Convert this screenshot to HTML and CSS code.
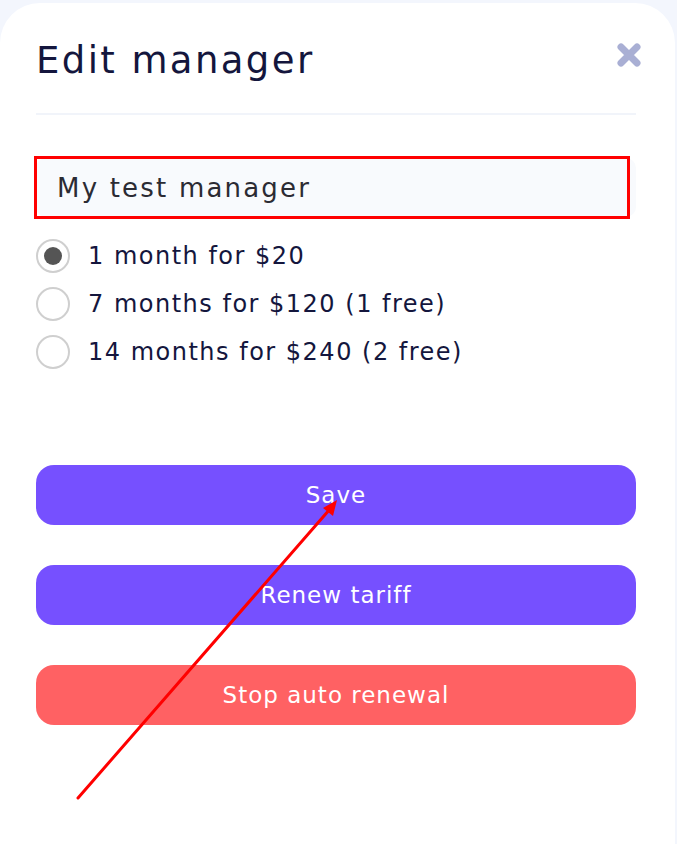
FILE: index.html
```html
<!DOCTYPE html>
<html lang="en">
<head>
    <meta charset="UTF-8">
    <meta name="viewport" content="width=device-width, initial-scale=1.0">
    <title>Edit manager</title>
    <link rel="stylesheet" href="styles.css">
</head>
<body>

    <div class="modal">
        <div class="modal-header">
            <h1>Edit manager</h1>
            <button class="close" aria-label="Close">
                <svg width="26" height="26" viewBox="0 0 26 26">
                    <path d="M5 5 L21 21 M21 5 L5 21" stroke="#a9afd4" stroke-width="7" stroke-linecap="round"/>
                </svg>
            </button>
        </div>

        <div class="field">
            <input type="text" id="manager-name" value="My test manager">
            <div class="mark"></div>
        </div>

        <ul class="tariffs">
            <li><label><input type="radio" name="tariff" checked><span class="dot"></span>1 month for $20</label></li>
            <li><label><input type="radio" name="tariff"><span class="dot"></span>7 months for $120 (1 free)</label></li>
            <li><label><input type="radio" name="tariff"><span class="dot"></span>14 months for $240 (2 free)</label></li>
        </ul>

        <div class="actions">
            <button class="btn">Save</button>
            <button class="btn">Renew tariff</button>
            <button class="btn btn-danger">Stop auto renewal</button>
        </div>
    </div>

    <!-- стрелка-пометка поверх скриншота -->
    <svg class="arrow" width="677" height="844" viewBox="0 0 677 844">
        <line x1="78" y1="798" x2="330" y2="509" stroke="#ff0000" stroke-width="3" stroke-linecap="round"/>
        <polygon points="337,500 323,508 333,516" fill="#ff0000"/>
    </svg>

</body>
</html>
```

FILE: styles.css
```css
* {
    box-sizing: border-box;
}
body {
    margin: 0;
    padding-top: 3px;
    background-color: #f3f6fd;
    font-family: "DejaVu Sans", sans-serif;
    color: #14163d;
    overflow: hidden;
}
.modal {
    width: 675px;
    min-height: 841px;
    padding: 0 39px 0 36px;
    background-color: #fff;
    border-radius: 40px 40px 0 0;
}
.modal-header {
    display: flex;
    justify-content: space-between;
    align-items: flex-start;
    padding-top: 33px;
    padding-bottom: 27px;
    border-bottom: 2px solid #f1f4fa;
}
.modal-header h1 {
    margin: 0;
    font-size: 37px;
    font-weight: 400;
    line-height: 50px;
    letter-spacing: 2.4px;
}
.close {
    border: 0;
    background: none;
    padding: 0;
    margin: 6px -6px 0 0;
    cursor: pointer;
}
.field {
    position: relative;
    margin-top: 43px;
}
.field input {
    display: block;
    width: 100%;
    height: 59px;
    padding: 0 21px;
    border: 0;
    border-radius: 10px;
    background-color: #f8fafd;
    font-family: inherit;
    font-size: 26px;
    letter-spacing: 2.2px;
    color: #2b2b33;
    outline: none;
}
.field .mark {
    position: absolute;
    left: -2px;
    top: -2px;
    width: 596px;
    height: 63px;
    border: 3px solid #ff0000;
    pointer-events: none;
}
.tariffs {
    list-style: none;
    margin: 15px 0 0;
    padding: 0;
}
.tariffs li {
    height: 48px;
}
.tariffs label {
    display: flex;
    align-items: center;
    height: 100%;
    font-size: 24px;
    letter-spacing: 1.5px;
    cursor: pointer;
}
.tariffs input {
    display: none;
}
.tariffs .dot {
    position: relative;
    width: 34px;
    height: 34px;
    margin-right: 18px;
    border: 2px solid #cfcfcf;
    border-radius: 50%;
}
.tariffs input:checked + .dot::after {
    content: "";
    position: absolute;
    left: 6px;
    top: 6px;
    width: 18px;
    height: 18px;
    border-radius: 50%;
    background-color: #555;
}
.actions {
    display: flex;
    flex-direction: column;
    gap: 40px;
    margin-top: 89px;
}
.btn {
    height: 60px;
    border: 0;
    border-radius: 18px;
    background-color: #7650ff;
    color: #fff;
    font-family: inherit;
    font-size: 23px;
    letter-spacing: 1px;
    cursor: pointer;
}
.btn-danger {
    background-color: #ff6163;
}
.arrow {
    position: absolute;
    left: 0;
    top: 0;
    pointer-events: none;
}
```
